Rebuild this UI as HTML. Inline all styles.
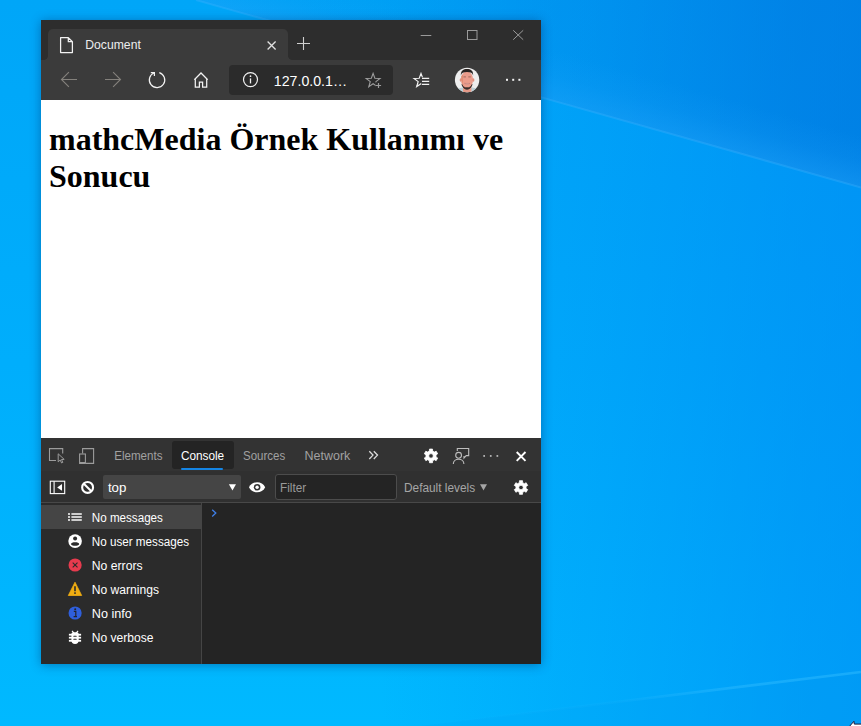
<!DOCTYPE html>
<html lang="tr">
<head>
<meta charset="utf-8">
<title>Document</title>
<style>
*{box-sizing:border-box;margin:0;padding:0}
html,body{width:861px;height:726px;overflow:hidden}
body{position:relative;font-family:"Liberation Sans",sans-serif;background:#0a8fe6}
#bg{position:absolute;left:0;top:0;width:861px;height:726px}
#win{position:absolute;left:41px;top:20px;width:500px;height:644px;background:#fff;box-shadow:0 1px 10px rgba(0,45,105,.45)}
#titlebar{position:absolute;left:0;top:0;width:500px;height:40px;background:#2d2d2d}
#tab{position:absolute;left:7px;top:9px;width:240px;height:31px;background:#3b3b3b;border-radius:5px 5px 0 0}
#tab:before,#tab:after{content:"";position:absolute;bottom:0;width:4px;height:4px}
#tab:before{left:-4px;background:radial-gradient(circle at 0 0,transparent 3.5px,#3b3b3b 4.2px)}
#tab:after{right:-4px;background:radial-gradient(circle at 100% 0,transparent 3.5px,#3b3b3b 4.2px)}
#toolbar{position:absolute;left:0;top:40px;width:500px;height:40px;background:#3b3b3b}
#addr{position:absolute;left:188px;top:5px;width:164px;height:30px;background:#2b2b2b;border-radius:4px}
#page{position:absolute;left:0;top:80px;width:500px;height:338px;background:#fff}
h1{position:absolute;left:8px;top:21px;width:484px;font-family:"Liberation Serif",serif;font-weight:bold;font-size:32px;line-height:37px;color:#000}
#dt{position:absolute;left:0;top:418px;width:500px;height:226px;background:#242424}
#dttabs{position:absolute;left:0;top:0;width:500px;height:33px;background:#333}
#dttabs .sel{position:absolute;left:131px;top:3px;width:62px;height:28px;background:#242424;border-radius:3px}
#dttabs .sel i{position:absolute;left:9px;right:11px;bottom:-1px;height:2px;background:#1585e4;border-radius:1px}
#ctb{position:absolute;left:0;top:33px;width:500px;height:32px;background:#303030;border-bottom:1px solid #484848}
#ctb .sel{position:absolute;left:62px;top:4px;width:138px;height:24px;background:#454545;border-radius:2px}
#ctb .filter{position:absolute;left:234px;top:3px;width:122px;height:26px;background:#242424;border:1px solid #4c4c4c;border-radius:3px}
#side{position:absolute;left:0;top:65px;width:161px;height:161px;background:#2b2b2b;border-right:1px solid #454545}
#side .on{position:absolute;left:0;top:2px;width:160px;height:24px;background:#454545}
#ov{position:absolute;left:0;top:0;width:861px;height:726px;overflow:visible}
#ov text{font-family:"Liberation Sans",sans-serif}
</style>
</head>
<body>
<svg id="bg" viewBox="0 0 861 726" preserveAspectRatio="none">
<defs>
<linearGradient id="g1" x1="0" y1="0" x2="0" y2="1">
<stop offset="0" stop-color="#00a6f8"/><stop offset=".5" stop-color="#00aefc"/><stop offset="1" stop-color="#00b9ff"/>
</linearGradient>
<linearGradient id="g2" gradientUnits="userSpaceOnUse" x1="380" y1="0" x2="861" y2="0">
<stop offset="0" stop-color="#0080f0" stop-opacity="0"/><stop offset=".46" stop-color="#0080f0" stop-opacity=".22"/><stop offset=".87" stop-color="#0080f0" stop-opacity=".45"/><stop offset="1" stop-color="#0080f0" stop-opacity=".5"/>
</linearGradient>
<linearGradient id="g3" gradientUnits="userSpaceOnUse" x1="196" y1="0" x2="861" y2="0">
<stop offset="0" stop-color="#0070d8" stop-opacity=".07"/><stop offset=".3" stop-color="#0070d8" stop-opacity=".12"/><stop offset=".6" stop-color="#0070d8" stop-opacity=".25"/><stop offset=".9" stop-color="#0070d8" stop-opacity=".48"/><stop offset="1" stop-color="#0070d8" stop-opacity=".52"/>
</linearGradient>
<linearGradient id="g4" gradientUnits="userSpaceOnUse" x1="700" y1="142.1" x2="713.5" y2="94">
<stop offset="0" stop-color="#22a4fa" stop-opacity=".42"/><stop offset=".5" stop-color="#22a4fa" stop-opacity=".14"/><stop offset="1" stop-color="#22a4fa" stop-opacity="0"/>
</linearGradient>
<linearGradient id="g5" gradientUnits="userSpaceOnUse" x1="420" y1="0" x2="861" y2="0">
<stop offset="0" stop-color="#30bcff" stop-opacity="0"/><stop offset=".45" stop-color="#30bcff" stop-opacity=".1"/><stop offset=".7" stop-color="#30bcff" stop-opacity=".45"/><stop offset="1" stop-color="#30bcff" stop-opacity=".5"/>
</linearGradient>
</defs>
<rect width="861" height="726" fill="url(#g1)"/>
<rect width="861" height="726" fill="url(#g2)"/>
<path d="M196 0L861 187.5V0Z" fill="url(#g3)"/>
<path d="M196 0L861 187.5L874.5 139.4L209.5 -48.1Z" fill="url(#g4)"/>
<path d="M196 0L861 187.5" stroke="#40b4ff" stroke-width="2" opacity=".32"/>
<path d="M420 726L861 672V726Z" fill="#0090ee" opacity=".1"/>
<path d="M420 726L861 672" stroke="url(#g5)" stroke-width="2.5"/>
</svg>
<div id="win">
 <div id="titlebar"><div id="tab"></div></div>
 <div id="toolbar"><div id="addr"></div></div>
 <div id="page"><h1>mathcMedia Örnek Kullanımı ve Sonucu</h1></div>
 <div id="dt">
  <div id="dttabs"><div class="sel"><i></i></div></div>
  <div id="ctb"><div class="sel"></div><div class="filter"></div></div>
  <div id="side"><div class="on"></div></div>
 </div>
</div>
<svg id="ov" viewBox="0 0 861 726">
<path d="M60.6 37.6H68.3L72.4 41.7V52.6H60.6Z M68.3 37.6V41.7H72.4" fill="none" stroke="#f2f2f2" stroke-width="1.25" stroke-linejoin="round"/>
<path d="M267.6 41.5L275.6 49.5M275.6 41.5L267.6 49.5" stroke="#e2e2e2" stroke-width="1.3" fill="none"/>
<path d="M297 43.5H310M303.5 37V50" stroke="#cfcfcf" stroke-width="1.1" fill="none"/>
<path d="M420.7 35.5H431.3" stroke="#9a9a9a" stroke-width="1" fill="none"/>
<rect x="467.5" y="30.5" width="9.5" height="9" fill="none" stroke="#9a9a9a" stroke-width="1"/>
<path d="M513.2 30.3L523.2 39.7M523.2 30.3L513.2 39.7" stroke="#9a9a9a" stroke-width="1" fill="none"/>
<path d="M77 79.5H61.5M68.9 72.1L61.5 79.5L68.9 86.9" stroke="#84817c" stroke-width="1.1" fill="none"/>
<path d="M105 79.5H120.5M113.1 72.1L120.5 79.5L113.1 86.9" stroke="#84817c" stroke-width="1.1" fill="none"/>
<path d="M159.30 72.54A7.70 7.70 0 1 1 154.29 72.71" stroke="#f2f2f2" stroke-width="1.25" fill="none"/>
<path d="M150.8 72.5H154.4V76.1" stroke="#f2f2f2" stroke-width="1.25" fill="none"/>
<path d="M194.3 79.7L201 73L207.7 79.7M195.3 78.9V87H199.4V82.1H202.6V87H206.7V78.9" stroke="#f2f2f2" stroke-width="1.25" fill="none" stroke-linejoin="miter"/>
<circle cx="250.5" cy="79.6" r="7" fill="none" stroke="#f2f2f2" stroke-width="1.2"/>
<path d="M250.5 78.4V83.4" stroke="#f2f2f2" stroke-width="1.3"/><circle cx="250.5" cy="76.2" r="0.85" fill="#f2f2f2"/>
<clipPath id="c1"><path d="M360 66H390V94H360Z M375.7 82.3V90H383V82.3Z" clip-rule="evenodd"/></clipPath>
<path d="M373.10 73.40L374.86 78.27L380.04 78.44L375.95 81.63L377.39 86.61L373.10 83.70L368.81 86.61L370.25 81.63L366.16 78.44L371.34 78.27Z" fill="none" stroke="#9d9d9d" stroke-width="1.1" stroke-linejoin="miter" clip-path="url(#c1)"/>
<path d="M375.9 85.5H381.1M378.5 82.9V88.1" stroke="#9d9d9d" stroke-width="1.2"/>
<clipPath id="c2"><path d="M406 66H436V94H406Z M421.3 77.2V92H432V77.2Z" clip-rule="evenodd"/></clipPath>
<path d="M421.00 73.40L422.76 78.27L427.94 78.44L423.85 81.63L425.29 86.61L421.00 83.70L416.71 86.61L418.15 81.63L414.06 78.44L419.24 78.27Z" fill="none" stroke="#f2f2f2" stroke-width="1.2" stroke-linejoin="miter" clip-path="url(#c2)"/>
<path d="M422 78.4H429.2M422 81.4H429.2M422 84.4H429.2" stroke="#f2f2f2" stroke-width="1.25"/>
<g>
<clipPath id="av"><circle cx="467.1" cy="80" r="12.2"/></clipPath>
<circle cx="467.1" cy="80" r="12.2" fill="#eeeeee"/>
<g clip-path="url(#av)">
<path d="M455 93V90.5C458 88.6 461 87.6 463 87.2H471.5C474 87.6 477 88.6 480 90.5V93Z" fill="#b9cfd6"/>
<rect x="463" y="85" width="8.4" height="8" fill="#e59a88"/>
<ellipse cx="467" cy="79.6" rx="6.1" ry="8.2" fill="#eb9d8c"/>
<ellipse cx="460.7" cy="80" rx="1" ry="1.8" fill="#e08f7e"/><ellipse cx="473.4" cy="80" rx="1" ry="1.8" fill="#e08f7e"/>
<path d="M460.9 75.5C460.5 70.5 463.5 69 467 69C470.6 69 473.6 70.5 473.1 75.5C472.6 72.8 470.5 72 467 72C463.5 72 461.4 72.8 460.9 75.5Z" fill="#2a2422"/>
<path d="M462 84.5C463 88 465 89.3 467 89.3C469 89.3 471 88 472 84.5C471.4 87 469.5 87.8 467 87.8C464.5 87.8 462.6 87 462 84.5Z" fill="#3a2e2c" stroke="#3a2e2c" stroke-width="0.8"/>
<path d="M461.2 76C461.6 80 462.4 84 464 86.6C462.6 84 462.4 79 462.8 75Z" fill="#d9805e" opacity=".8"/>
<path d="M463.4 76.9H465.9M468.3 76.9H470.8" stroke="#8a5a4c" stroke-width="1" opacity=".75"/>
<path d="M464.6 83.4C465.8 84.6 468.6 84.6 469.8 83.4Z" fill="#f4eeee" stroke="#b9695e" stroke-width="0.5"/>
</g></g>
<rect x="506.0" y="78.8" width="2" height="2" fill="#f2f2f2"/>
<rect x="512.2" y="78.8" width="2" height="2" fill="#f2f2f2"/>
<rect x="518.4" y="78.8" width="2" height="2" fill="#f2f2f2"/>
<path d="M848.6 727.4L853.9 721.3L854.3 724.1H862V728Z" fill="#fff" stroke="#15153a" stroke-width="1"/>
<path d="M56 460.5H49.5V448.6H62.7V453.6" fill="none" stroke="#9c9c9c" stroke-width="1.1"/>
<path d="M58.2 453.8V461.9L60.2 460L61.6 463L62.8 462.4L61.5 459.5L64.2 459.4Z" fill="#333" stroke="#9c9c9c" stroke-width="1" stroke-linejoin="miter"/>
<path d="M82.6 453.4V448.6H93.6V463.4H86" fill="none" stroke="#9c9c9c" stroke-width="1.1"/>
<rect x="79.6" y="454" width="5.8" height="9.4" fill="none" stroke="#9c9c9c" stroke-width="1.1"/>
<path d="M79.6 462.9H85.4" stroke="#9c9c9c" stroke-width="1.8"/>
<path d="M369.3 451.2L373 455.1L369.3 459M373.8 451.2L377.5 455.1L373.8 459" fill="none" stroke="#dcdcdc" stroke-width="1.3"/>
<path d="M432.63 460.73 L432.53 462.73 L429.47 462.73 L429.37 460.73 L427.63 459.73 L425.85 460.64 L424.32 457.99 L426.00 456.91 L426.00 454.89 L424.32 453.81 L425.85 451.16 L427.63 452.07 L429.37 451.07 L429.47 449.07 L432.53 449.07 L432.63 451.07 L434.37 452.07 L436.15 451.16 L437.68 453.81 L436.00 454.89 L436.00 456.91 L437.68 457.99 L436.15 460.64 L434.37 459.73Z M428.70 455.90 a2.30 2.30 0 1 0 4.60 0 a2.30 2.30 0 1 0 -4.60 0Z" fill="#fff" fill-rule="evenodd" stroke="#fff" stroke-width="0.8" stroke-linejoin="round"/>
<path d="M522.63 492.33 L522.53 494.33 L519.47 494.33 L519.37 492.33 L517.63 491.33 L515.85 492.24 L514.32 489.59 L516.00 488.51 L516.00 486.49 L514.32 485.41 L515.85 482.76 L517.63 483.67 L519.37 482.67 L519.47 480.67 L522.53 480.67 L522.63 482.67 L524.37 483.67 L526.15 482.76 L527.68 485.41 L526.00 486.49 L526.00 488.51 L527.68 489.59 L526.15 492.24 L524.37 491.33Z M518.70 487.50 a2.30 2.30 0 1 0 4.60 0 a2.30 2.30 0 1 0 -4.60 0Z" fill="#fff" fill-rule="evenodd" stroke="#fff" stroke-width="0.8" stroke-linejoin="round"/>
<circle cx="458.6" cy="455.3" r="2.9" fill="none" stroke="#bdbdbd" stroke-width="1.1"/>
<path d="M453.3 464C453.3 457.6 463.9 457.6 463.9 464" fill="none" stroke="#bdbdbd" stroke-width="1.1"/>
<path d="M457.3 451V448.5H468.7V455.6H466.2L464 458V455.9" fill="none" stroke="#bdbdbd" stroke-width="1.1"/>
<rect x="483.3" y="455.1" width="1.7" height="1.7" fill="#bdbdbd"/>
<rect x="489.9" y="455.1" width="1.7" height="1.7" fill="#bdbdbd"/>
<rect x="496.5" y="455.1" width="1.7" height="1.7" fill="#bdbdbd"/>
<path d="M516.7 452L525.5 460.8M525.5 452L516.7 460.8" stroke="#fff" stroke-width="1.9" fill="none"/>
<rect x="50.3" y="481.2" width="14.4" height="12.4" fill="none" stroke="#fff" stroke-width="1.1"/>
<path d="M54.1 481.2V493.6" stroke="#fff" stroke-width="1.1"/>
<path d="M57.2 487.4L62 484.1V490.7Z" fill="#fff"/>
<circle cx="87.6" cy="487.4" r="5.45" fill="none" stroke="#fff" stroke-width="2.1"/>
<path d="M83.6 483.4L91.6 491.4" stroke="#fff" stroke-width="2.1"/>
<path d="M228.9 484.2H236L232.45 490.4Z" fill="#fff"/>
<path d="M249 487.3C252 480.6 262.2 480.6 265.2 487.3C262.2 494 252 494 249 487.3Z" fill="#fff"/>
<circle cx="257.1" cy="487.3" r="3.3" fill="#333"/><circle cx="257.1" cy="487.3" r="1.7" fill="#fff"/>
<path d="M480 484.2H487L483.5 490.4Z" fill="#a6a6a6"/>
<rect x="68" y="513.1" width="2" height="1.8" fill="#dcdcdc"/><rect x="71.4" y="513.1" width="10.4" height="1.8" fill="#dcdcdc"/>
<rect x="68" y="516.1" width="2" height="1.8" fill="#dcdcdc"/><rect x="71.4" y="516.1" width="10.4" height="1.8" fill="#dcdcdc"/>
<rect x="68" y="519.1" width="2" height="1.8" fill="#dcdcdc"/><rect x="71.4" y="519.1" width="10.4" height="1.8" fill="#dcdcdc"/>
<circle cx="75.1" cy="541.1" r="6.8" fill="#fff"/>
<circle cx="75.1" cy="538.6" r="2" fill="#2b2b2b"/>
<path d="M71 544.2C71 541.6 79.2 541.6 79.2 544.2C78 546.2 72.2 546.2 71 544.2Z" fill="#2b2b2b"/>
<circle cx="75.1" cy="565" r="6.6" fill="#e63b4e"/>
<path d="M72.7 562.6L77.5 567.4M77.5 562.6L72.7 567.4" stroke="#2b2b2b" stroke-width="1.1"/>
<path d="M75 582.2L81.7 595.5H68.3Z" fill="#f0ad12" stroke="#f0ad12" stroke-width="0.8" stroke-linejoin="round"/>
<path d="M75 586.2V591.2" stroke="#2b2b2b" stroke-width="1.6"/><rect x="74.2" y="592.3" width="1.6" height="1.6" fill="#2b2b2b"/>
<circle cx="75.1" cy="613" r="6.6" fill="#2f5fdb"/>
<path d="M73.8 611.4H75.8V616.4M73.6 616.6H77" stroke="#23232b" stroke-width="1.2" fill="none"/><circle cx="75.2" cy="609.3" r="1" fill="#23232b"/>
<path d="M71.4 634Q71.4 632.8 72.6 632.4L71.6 631.2L72.4 630.5L73.8 631.9Q75.05 632.6 76.3 631.9L77.7 630.5L78.5 631.2L77.5 632.4Q78.7 632.8 78.7 634V640Q78.7 643.9 75.05 643.9Q71.4 643.9 71.4 640Z" fill="#fff"/>
<rect x="68.9" y="633.80" width="12.2" height="1.8" fill="#fff"/>
<rect x="68.9" y="636.80" width="12.2" height="1.8" fill="#fff"/>
<rect x="68.9" y="639.90" width="12.2" height="1.8" fill="#fff"/>
<rect x="73.3" y="635.65" width="3.4" height="1.1" rx="0.5" fill="#2b2b2b"/>
<rect x="73.3" y="638.75" width="3.4" height="1.1" rx="0.5" fill="#2b2b2b"/>
<path d="M212.2 509.8L215.8 513.1L212.2 516.4" fill="none" stroke="#3f7fe8" stroke-width="1.3"/>
<text x="85.3" y="49.2" font-size="12" fill="#ededed" textLength="55.5" lengthAdjust="spacingAndGlyphs">Document</text>
<text x="273.8" y="85.9" font-size="15.5" fill="#ffffff" textLength="73.3" lengthAdjust="spacingAndGlyphs">127.0.0.1…</text>
<text x="114.2" y="460.0" font-size="12" fill="#a1a1a1" textLength="48.3" lengthAdjust="spacingAndGlyphs">Elements</text>
<text x="180.9" y="460.0" font-size="12" fill="#ffffff" textLength="43.3" lengthAdjust="spacingAndGlyphs">Console</text>
<text x="243.0" y="460.0" font-size="12" fill="#a1a1a1" textLength="42.2" lengthAdjust="spacingAndGlyphs">Sources</text>
<text x="304.6" y="460.0" font-size="12" fill="#a1a1a1" textLength="45.7" lengthAdjust="spacingAndGlyphs">Network</text>
<text x="107.9" y="491.8" font-size="12" fill="#ffffff" textLength="18.5" lengthAdjust="spacingAndGlyphs">top</text>
<text x="280.0" y="491.8" font-size="12" fill="#9a9a9a" textLength="26.1" lengthAdjust="spacingAndGlyphs">Filter</text>
<text x="404.0" y="491.8" font-size="12" fill="#a6a6a6" textLength="71.1" lengthAdjust="spacingAndGlyphs">Default levels</text>
<text x="91.8" y="522.0" font-size="12" fill="#ffffff" textLength="71.1" lengthAdjust="spacingAndGlyphs">No messages</text>
<text x="91.8" y="546.0" font-size="12" fill="#ffffff" textLength="97.2" lengthAdjust="spacingAndGlyphs">No user messages</text>
<text x="91.8" y="570.0" font-size="12" fill="#ffffff" textLength="50.8" lengthAdjust="spacingAndGlyphs">No errors</text>
<text x="91.8" y="594.0" font-size="12" fill="#ffffff" textLength="67.2" lengthAdjust="spacingAndGlyphs">No warnings</text>
<text x="91.8" y="618.0" font-size="12" fill="#ffffff" textLength="40.0" lengthAdjust="spacingAndGlyphs">No info</text>
<text x="91.8" y="642.0" font-size="12" fill="#ffffff" textLength="61.6" lengthAdjust="spacingAndGlyphs">No verbose</text>
</svg>
</body>
</html>
